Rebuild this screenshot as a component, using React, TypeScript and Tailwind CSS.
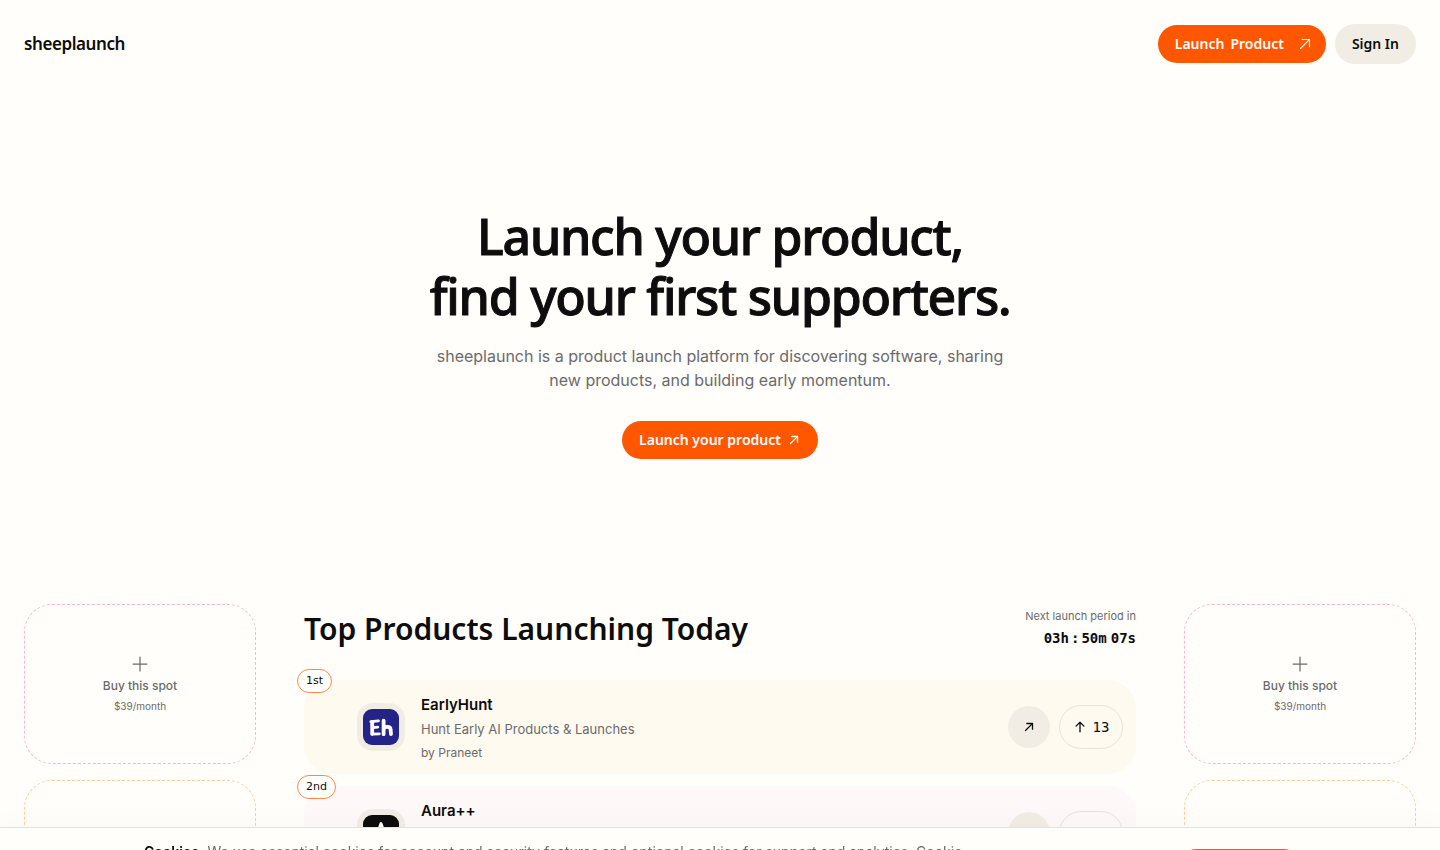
import { PiArrowUpBold, PiArrowUpRight, PiArrowUpRightBold, PiPlus } from "react-icons/pi";

const products = [
  {
    rank: "1st",
    name: "EarlyHunt",
    tagline: "Hunt Early AI Products & Launches",
    maker: "by Praneet",
    votes: 13,
    logo: "early",
    card: "bg-[#fffaf0]",
  },
  {
    rank: "2nd",
    name: "Aura++",
    tagline: "",
    maker: "",
    votes: 12,
    logo: "aura",
    card: "bg-[#fef8f8]",
  },
];

const spots = [
  { id: "a", border: "border-[#f7b8d4]" },
  { id: "b", border: "border-[#ffcba3]" },
];

const display = "font-['Noto_Sans','Open_Sans',sans-serif]";

function EarlyLogo() {
  return (
    <svg viewBox="0 0 36 36" className="size-9" aria-hidden="true">
      <rect width="36" height="36" rx="9" fill="#232389" />
      <g fill="none" stroke="#fff" strokeLinecap="round" strokeLinejoin="round">
        <path strokeWidth="3.8" d="M9.200 13.200v11.600" />
        <path strokeWidth="2.800" d="M7.800 12.600l7.700-.8M9.500 18.600l5.300-.4M9 25.200l7.300-.4" />
        <path strokeWidth="3.800" d="M20.600 11.600v13.600M20.600 20c1.500-2.600 7-3.200 7 .8l.4 4.200" />
      </g>
    </svg>
  );
}

function AuraLogo() {
  return (
    <svg viewBox="0 0 36 36" className="size-9" aria-hidden="true">
      <rect width="36" height="36" rx="9" fill="#0d0d0d" />
      <path d="M11 27l7-18.500 7 18.500M14 21h8" fill="none" stroke="#fff" strokeWidth="2.800" strokeLinecap="round" strokeLinejoin="round" />
    </svg>
  );
}

function Header() {
  return (
    <header className="flex items-center justify-between px-6 py-6">
      <a href="#" className={`${display} text-[17px] font-semibold tracking-tight`}>
        sheeplaunch
      </a>
      <div className="flex items-center gap-[9px]">
        <a
          href="#launch"
          className={`${display} flex h-[38px] items-center gap-3 rounded-full bg-[#ff5700] pr-3 pl-[17px] text-sm font-semibold text-white`}
        >
          <span className="flex gap-[6px]">
            <span>Launch</span>
            <span>Product</span>
          </span>
          <PiArrowUpRight className="size-[18px]" />
        </a>
        <button type="button" className={`${display} h-10 rounded-full bg-[#f2ede4] px-[17px] text-sm font-semibold`}>
          Sign In
        </button>
      </div>
    </header>
  );
}

function Hero() {
  return (
    <section className="flex flex-col items-center px-6 pt-[118px] pb-[145px] text-center">
      <h1
        className={`${display} text-[50px] leading-[60px] font-medium tracking-tight [-webkit-text-stroke:1px_#0d0d0d]`}
      >
        Launch your product,
        <br />
        find your first supporters.
      </h1>
      <p className="mt-[18px] max-w-[600px] text-base leading-6 text-[#6b6b6b]">
        sheeplaunch is a product launch platform for discovering software, sharing new products, and building early
        momentum.
      </p>
      <a
        href="#launch"
        className={`${display} mt-[29px] flex h-[38px] items-center gap-[6px] rounded-full bg-[#ff5700] px-[17px] text-sm font-semibold text-white`}
      >
        Launch your product
        <PiArrowUpRightBold className="size-[14px]" />
      </a>
    </section>
  );
}

function Spots() {
  return (
    <aside className="flex flex-col gap-4">
      {spots.map((spot) => (
        <a
          key={spot.id}
          href="#advertise"
          className={`flex h-40 flex-col items-center justify-center rounded-[28px] border border-dashed text-[#6b6b6b] ${spot.border}`}
        >
          <PiPlus className="size-5" />
          <span className="mt-[2px] text-xs leading-5 font-medium">Buy this spot</span>
          <span className="mt-[2px] text-[10px] leading-4">$39/month</span>
        </a>
      ))}
    </aside>
  );
}

function ProductCard({ product }: { product: (typeof products)[number] }) {
  return (
    <li className={`relative flex h-[94px] items-center rounded-[28px] pr-[13px] pl-[53px] ${product.card}`}>
      <span className="absolute -top-[11px] -left-[7px] flex h-6 items-center rounded-full border border-[#ff8a4c] bg-[#fffefb] px-2 font-['DejaVu_Sans',sans-serif] text-[11px]">
        {product.rank}
      </span>
      <div className="flex size-12 items-center justify-center rounded-2xl bg-[#f2ede4]">
        {product.logo === "early" ? <EarlyLogo /> : <AuraLogo />}
      </div>
      <div className="ml-4 h-[68px] flex-1">
        <h3 className="text-[15px] leading-6 font-semibold">{product.name}</h3>
        <p className="text-[13px] leading-6 text-[#6b6b6b]">{product.tagline}</p>
        <p className="text-xs leading-6 text-[#6b6b6b]">{product.maker}</p>
      </div>
      <a
        href="#visit"
        aria-label={`Visit ${product.name}`}
        className="flex size-[42px] items-center justify-center rounded-full bg-[#f2ede4]"
      >
        <PiArrowUpRightBold className="size-[14px]" />
      </a>
      <button
        type="button"
        className="ml-[9px] flex h-11 w-16 items-center justify-center gap-[6px] rounded-full border border-[#e5e3de] font-['DejaVu_Sans_Mono',monospace] text-sm"
      >
        <PiArrowUpBold className="size-[14px]" />
        {product.votes}
      </button>
    </li>
  );
}

function Launches() {
  return (
    <main>
      <div className="flex items-start justify-between">
        <h2 className={`${display} text-[30px] leading-[50px] font-semibold`}>Top Products Launching Today</h2>
        <div className="pt-[2px] text-right">
          <p className="text-[11px] leading-5 text-[#6b6b6b]">Next launch period in</p>
          <p className="mt-[2px] flex justify-end gap-[2px] font-['DejaVu_Sans_Mono',monospace] text-sm leading-5 font-bold">
            <span>03h</span>
            <span>:</span>
            <span className="mr-[2px]">50m</span>
            <span>07s</span>
          </p>
        </div>
      </div>
      <ol className="mt-[26px] flex flex-col gap-3">
        {products.map((product) => (
          <ProductCard key={product.name} product={product} />
        ))}
      </ol>
    </main>
  );
}

function CookieBar() {
  return (
    <div className="fixed inset-x-0 bottom-0 h-[23px] overflow-hidden border-t border-[#e2e2e0] bg-[#fffefb] shadow-[0_-8px_24px_rgba(0,0,0,0.02)]">
      <div className="mx-auto flex max-w-6xl items-start justify-between">
        <p className="pt-[14px] text-sm leading-5 whitespace-nowrap text-[#6b6b6b]">
          <strong className="font-semibold text-[#0d0d0d]">Cookies.</strong>{" "}
          We use essential cookies for account and security features and optional cookies for support and analytics.
          Cookie
        </p>
        <button type="button" aria-label="Accept cookies" className="mt-[21px] h-9 w-[112px] rounded-xl bg-[#ff5700]" />
      </div>
    </div>
  );
}

export default function App() {
  return (
    <div className="h-screen overflow-hidden bg-[#fffefb] font-['Inter',sans-serif] text-[#0d0d0d]">
      <Header />
      <Hero />
      <div className="grid grid-cols-[232px_1fr_232px] gap-12 px-6">
        <Spots />
        <Launches />
        <Spots />
      </div>
      <CookieBar />
    </div>
  );
}
